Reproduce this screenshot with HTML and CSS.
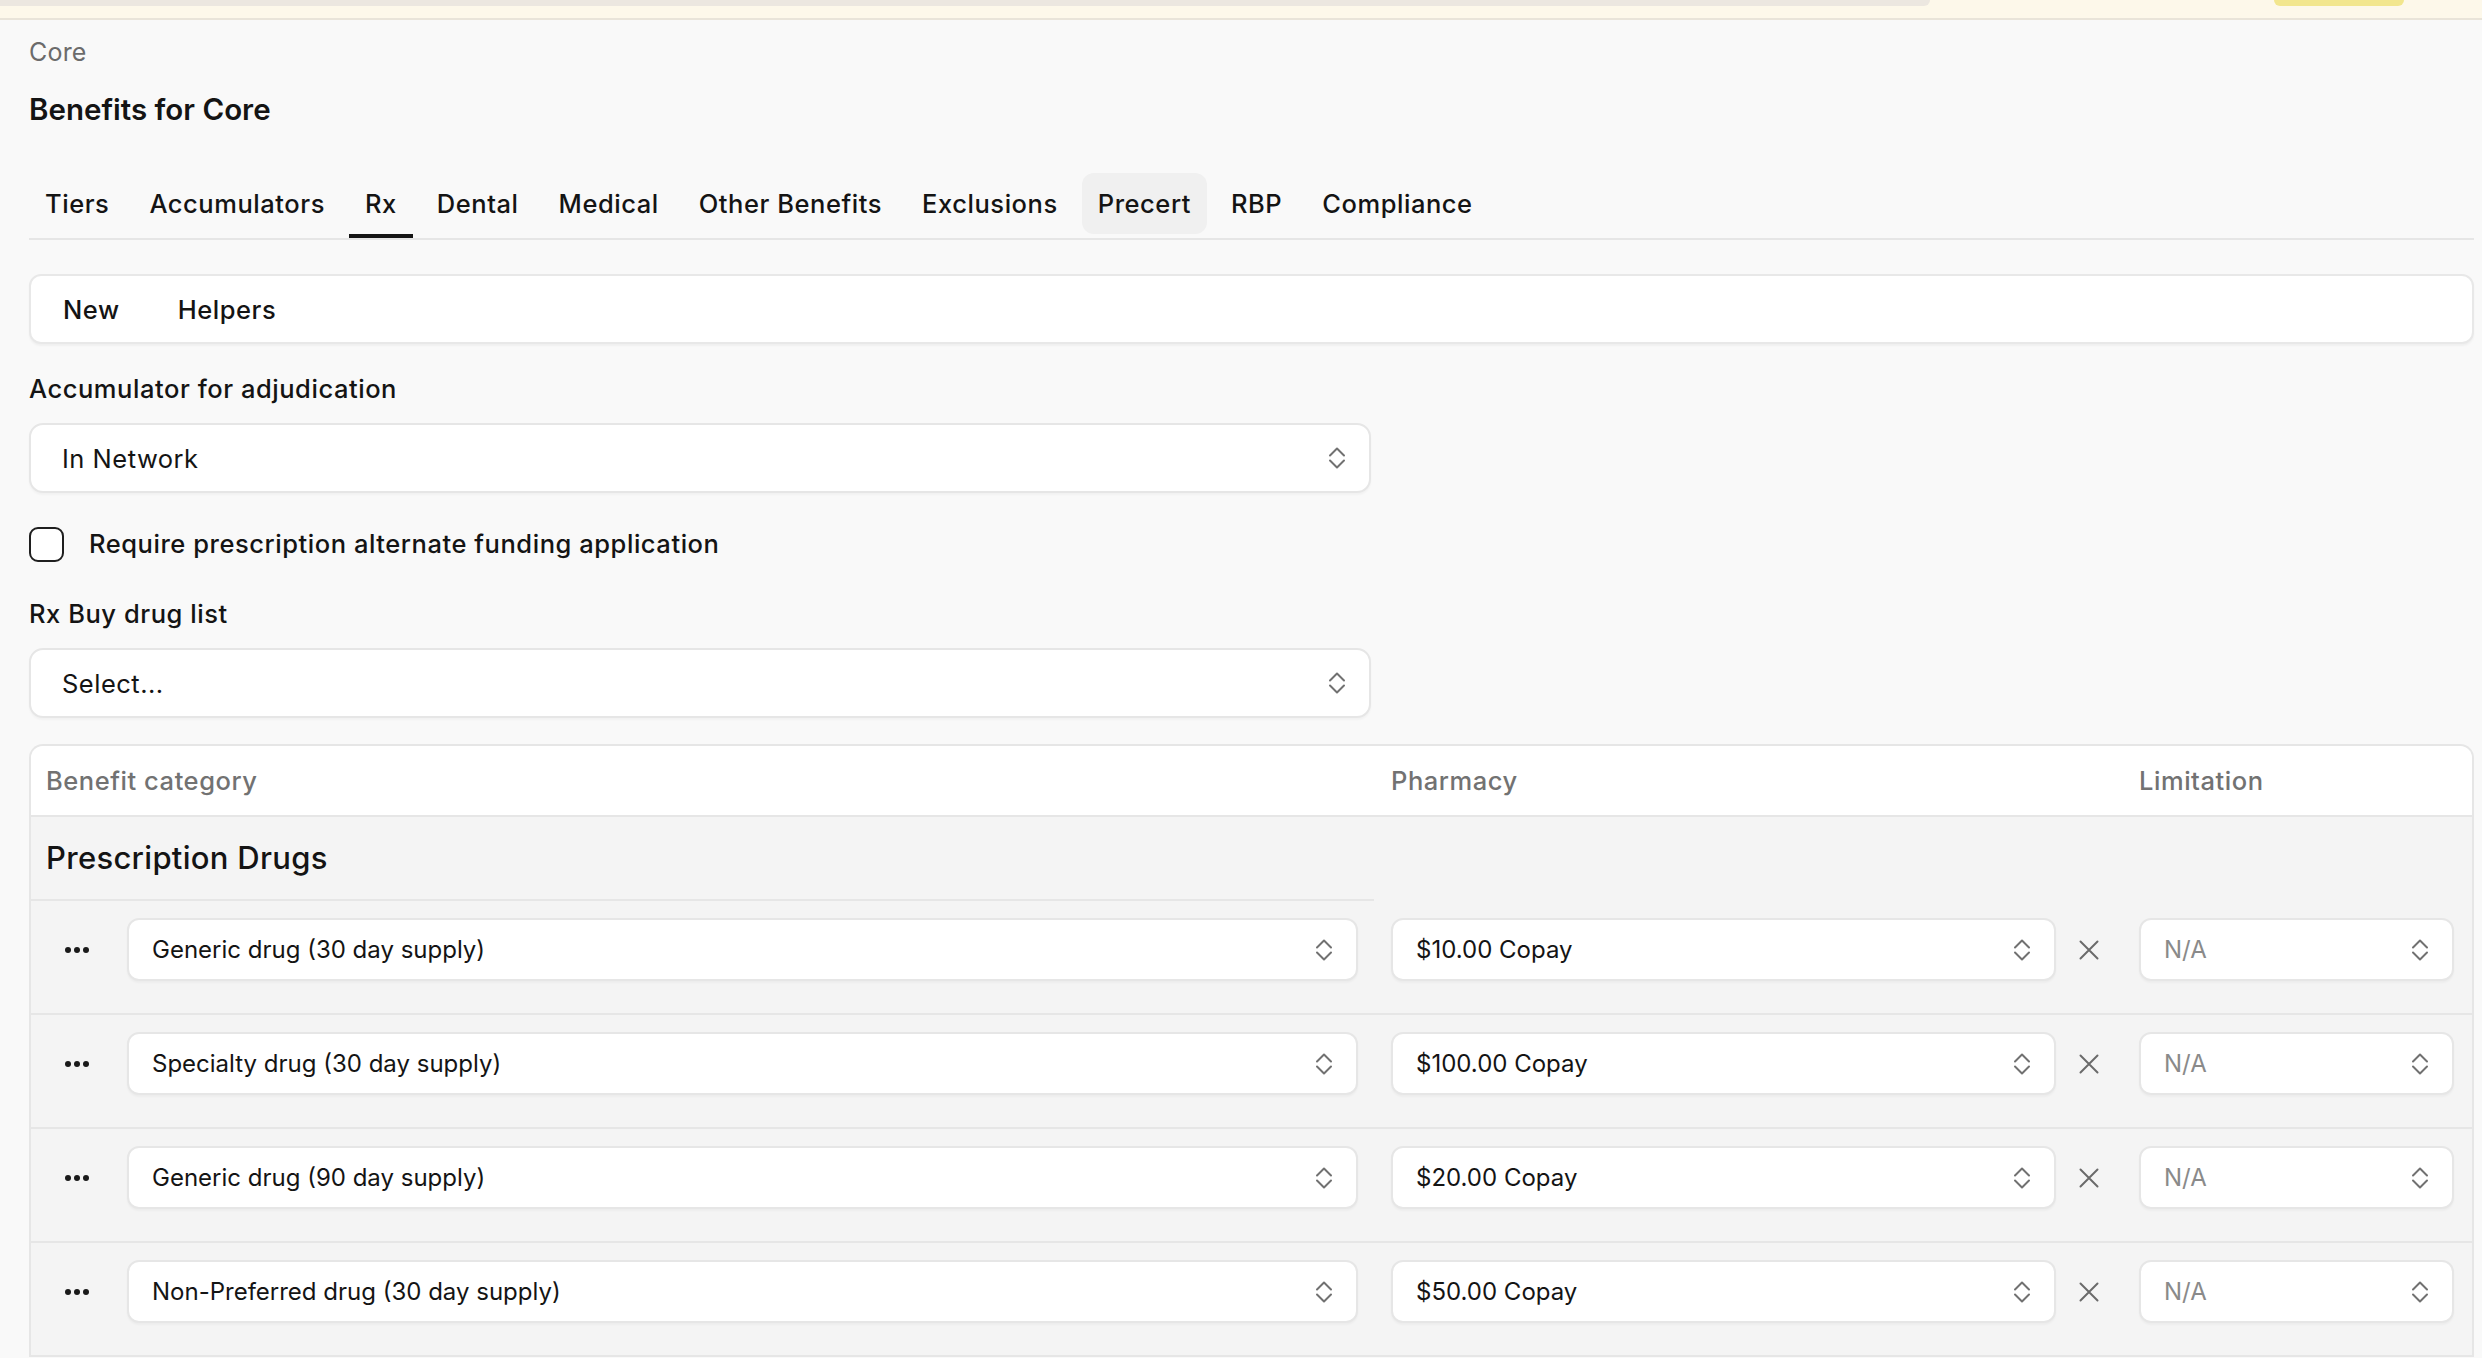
FILE: index.html
```html
<!DOCTYPE html>
<html lang="en">
<head>
    <meta charset="UTF-8">
    <meta name="viewport" content="width=device-width, initial-scale=1.0">
    <title>Benefits for Core</title>
    <link rel="stylesheet" href="styles.css">
</head>
<body>
    <div class="banner">
        <span class="banner-bar"></span>
        <span class="banner-btn"></span>
    </div>

    <div class="page">
        <div class="crumb">Core</div>
        <h1>Benefits for Core</h1>

        <!-- Section tabs -->
        <nav class="tabs">
            <a class="tab">Tiers</a>
            <a class="tab">Accumulators</a>
            <a class="tab active">Rx</a>
            <a class="tab">Dental</a>
            <a class="tab">Medical</a>
            <a class="tab">Other Benefits</a>
            <a class="tab">Exclusions</a>
            <a class="tab hover">Precert</a>
            <a class="tab">RBP</a>
            <a class="tab">Compliance</a>
        </nav>

        <div class="toolbar">
            <button>New</button>
            <button>Helpers</button>
        </div>

        <label class="field-label">Accumulator for adjudication</label>
        <div class="select big">
            <span>In Network</span>
            <svg class="chev" viewBox="0 0 18 24"><path d="M2 9.5L9 2.5L16 9.5M2 14.5L9 21.5L16 14.5"/></svg>
        </div>

        <label class="check">
            <span class="box"></span>
            Require prescription alternate funding application
        </label>

        <label class="field-label">Rx Buy drug list</label>
        <div class="select big">
            <span>Select...</span>
            <svg class="chev" viewBox="0 0 18 24"><path d="M2 9.5L9 2.5L16 9.5M2 14.5L9 21.5L16 14.5"/></svg>
        </div>

        <!-- Benefit table -->
        <div class="table">
            <div class="thead">
                <div class="th">Benefit category</div>
                <div class="th">Pharmacy</div>
                <div class="th">Limitation</div>
            </div>

            <div class="group">
                <div class="group-title">Prescription Drugs</div>
            </div>

            <div class="row">
                <div class="cell cat">
                    <button class="dots"><i></i><i></i><i></i></button>
                    <div class="select"><span>Generic drug (30 day supply)</span><svg class="chev" viewBox="0 0 18 24"><path d="M2 9.5L9 2.5L16 9.5M2 14.5L9 21.5L16 14.5"/></svg></div>
                </div>
                <div class="cell pharm">
                    <div class="select"><span>$10.00 Copay</span><svg class="chev" viewBox="0 0 18 24"><path d="M2 9.5L9 2.5L16 9.5M2 14.5L9 21.5L16 14.5"/></svg></div>
                    <button class="clear"><svg viewBox="0 0 20 20"><path d="M1.5 1.5L18.5 18.5M18.5 1.5L1.5 18.5"/></svg></button>
                </div>
                <div class="cell limit">
                    <div class="select muted"><span>N/A</span><svg class="chev" viewBox="0 0 18 24"><path d="M2 9.5L9 2.5L16 9.5M2 14.5L9 21.5L16 14.5"/></svg></div>
                </div>
            </div>

            <div class="row">
                <div class="cell cat">
                    <button class="dots"><i></i><i></i><i></i></button>
                    <div class="select"><span>Specialty drug (30 day supply)</span><svg class="chev" viewBox="0 0 18 24"><path d="M2 9.5L9 2.5L16 9.5M2 14.5L9 21.5L16 14.5"/></svg></div>
                </div>
                <div class="cell pharm">
                    <div class="select"><span>$100.00 Copay</span><svg class="chev" viewBox="0 0 18 24"><path d="M2 9.5L9 2.5L16 9.5M2 14.5L9 21.5L16 14.5"/></svg></div>
                    <button class="clear"><svg viewBox="0 0 20 20"><path d="M1.5 1.5L18.5 18.5M18.5 1.5L1.5 18.5"/></svg></button>
                </div>
                <div class="cell limit">
                    <div class="select muted"><span>N/A</span><svg class="chev" viewBox="0 0 18 24"><path d="M2 9.5L9 2.5L16 9.5M2 14.5L9 21.5L16 14.5"/></svg></div>
                </div>
            </div>

            <div class="row">
                <div class="cell cat">
                    <button class="dots"><i></i><i></i><i></i></button>
                    <div class="select"><span>Generic drug (90 day supply)</span><svg class="chev" viewBox="0 0 18 24"><path d="M2 9.5L9 2.5L16 9.5M2 14.5L9 21.5L16 14.5"/></svg></div>
                </div>
                <div class="cell pharm">
                    <div class="select"><span>$20.00 Copay</span><svg class="chev" viewBox="0 0 18 24"><path d="M2 9.5L9 2.5L16 9.5M2 14.5L9 21.5L16 14.5"/></svg></div>
                    <button class="clear"><svg viewBox="0 0 20 20"><path d="M1.5 1.5L18.5 18.5M18.5 1.5L1.5 18.5"/></svg></button>
                </div>
                <div class="cell limit">
                    <div class="select muted"><span>N/A</span><svg class="chev" viewBox="0 0 18 24"><path d="M2 9.5L9 2.5L16 9.5M2 14.5L9 21.5L16 14.5"/></svg></div>
                </div>
            </div>

            <div class="row">
                <div class="cell cat">
                    <button class="dots"><i></i><i></i><i></i></button>
                    <div class="select"><span>Non-Preferred drug (30 day supply)</span><svg class="chev" viewBox="0 0 18 24"><path d="M2 9.5L9 2.5L16 9.5M2 14.5L9 21.5L16 14.5"/></svg></div>
                </div>
                <div class="cell pharm">
                    <div class="select"><span>$50.00 Copay</span><svg class="chev" viewBox="0 0 18 24"><path d="M2 9.5L9 2.5L16 9.5M2 14.5L9 21.5L16 14.5"/></svg></div>
                    <button class="clear"><svg viewBox="0 0 20 20"><path d="M1.5 1.5L18.5 18.5M18.5 1.5L1.5 18.5"/></svg></button>
                </div>
                <div class="cell limit">
                    <div class="select muted"><span>N/A</span><svg class="chev" viewBox="0 0 18 24"><path d="M2 9.5L9 2.5L16 9.5M2 14.5L9 21.5L16 14.5"/></svg></div>
                </div>
            </div>
        </div>
    </div>
</body>
</html>
```

FILE: styles.css
```css
* { box-sizing: border-box; }
body { margin: 0; background: #f9f9f9; color: #141414; font-family: Inter, "Open Sans", sans-serif; font-size: 25.5px; letter-spacing: 0.55px; }
button { font: inherit; color: inherit; letter-spacing: inherit; background: none; border: none; padding: 0; cursor: pointer; }

.banner { height: 20px; background: #fdf8ea; border-bottom: 2px solid #e9e4d9; display: flex; justify-content: space-between; }
.banner-bar { width: 1930px; height: 6px; background: #ece7e0; border-radius: 0 0 12px 0; }
.banner-btn { width: 130px; height: 6px; margin-right: 78px; background: #f2e68e; border-radius: 0 0 14px 14px; }

.page { padding: 0 8px 0 29px; }
.crumb { margin-top: 17px; line-height: 30px; color: #6b6b6b; font-size: 25px; letter-spacing: 0.2px; }
h1 { margin: 24px 0 0; font-size: 29.5px; line-height: 36px; font-weight: 600; letter-spacing: 0; }

.tabs { display: flex; gap: 8px; margin-top: 46px; border-bottom: 2px solid #e6e6e6; }
.tab { display: block; height: 65px; padding: 0 16px; line-height: 61px; font-weight: 500; border-bottom: 4px solid transparent; }
.tab.active { border-bottom-color: #141414; }
.tab.hover { height: 61px; background: #f0f0f0; border-radius: 12px; border-bottom: none; }

.toolbar { display: flex; align-items: center; gap: 58px; height: 70px; margin-top: 34px; padding-left: 32px; background: #fff; border: 2px solid #e8e8e8; border-radius: 12px; box-shadow: 0 2px 2px rgba(0, 0, 0, 0.04); }
.toolbar button { font-weight: 500; }

.field-label { display: block; margin-top: 30px; line-height: 30px; font-weight: 500; }

.select { display: flex; align-items: center; justify-content: space-between; height: 63px; padding: 0 23px 0 23px; background: #fff; border: 2px solid #e6e6e6; border-radius: 12px; box-shadow: 0 2px 2px rgba(0, 0, 0, 0.03); font-size: 24px; letter-spacing: 0; }
.select.big { width: 1342px; height: 70px; margin-top: 19px; padding: 0 23px 0 31px; border-radius: 14px; font-size: 25.5px; letter-spacing: 0.5px; }
.select.muted { color: #8a8a8a; }
.chev { flex: none; width: 18px; height: 24px; fill: none; stroke: #717171; stroke-width: 2; stroke-linecap: round; stroke-linejoin: round; }

.check { display: flex; align-items: center; gap: 25px; margin-top: 33px; line-height: 36px; font-weight: 500; }
.check .box { width: 35px; height: 35px; border: 2px solid #1f1f1f; border-radius: 9px; background: #fff; }
.check + .field-label { margin-top: 37px; }

.table { margin-top: 26px; background: #f4f4f4; border: 2px solid #e6e6e6; border-bottom: none; border-radius: 14px 14px 0 0; overflow: hidden; }
.thead, .row, .group { display: grid; grid-template-columns: 1343px 748px 1fr; }
.thead { height: 71px; background: #fff; border-bottom: 2px solid #e6e6e6; }
.th { padding-left: 15px; line-height: 69px; color: #727272; font-weight: 500; }
.th + .th { padding-left: 17px; }

.group-title { height: 84px; padding-left: 15px; line-height: 82px; font-size: 31px; font-weight: 500; letter-spacing: 0.3px; border-bottom: 2px solid #e6e6e6; }

.row { padding: 17px 0 32px; border-bottom: 2px solid #e6e6e6; }
.cell { display: flex; align-items: center; }
.cell .select { flex: 1; }
.cat { padding: 0 16px 0 15px; }
.pharm { padding-left: 17px; }
.limit { padding: 0 18px 0 17px; }

.dots { display: flex; justify-content: center; gap: 3px; width: 62px; margin-right: 19px; }
.dots i { width: 6px; height: 6px; border-radius: 50%; background: #1a1a1a; }

.clear { display: flex; justify-content: center; width: 66px; }
.clear svg { width: 20px; height: 20px; fill: none; stroke: #6a6a6a; stroke-width: 2; stroke-linecap: round; }
```
